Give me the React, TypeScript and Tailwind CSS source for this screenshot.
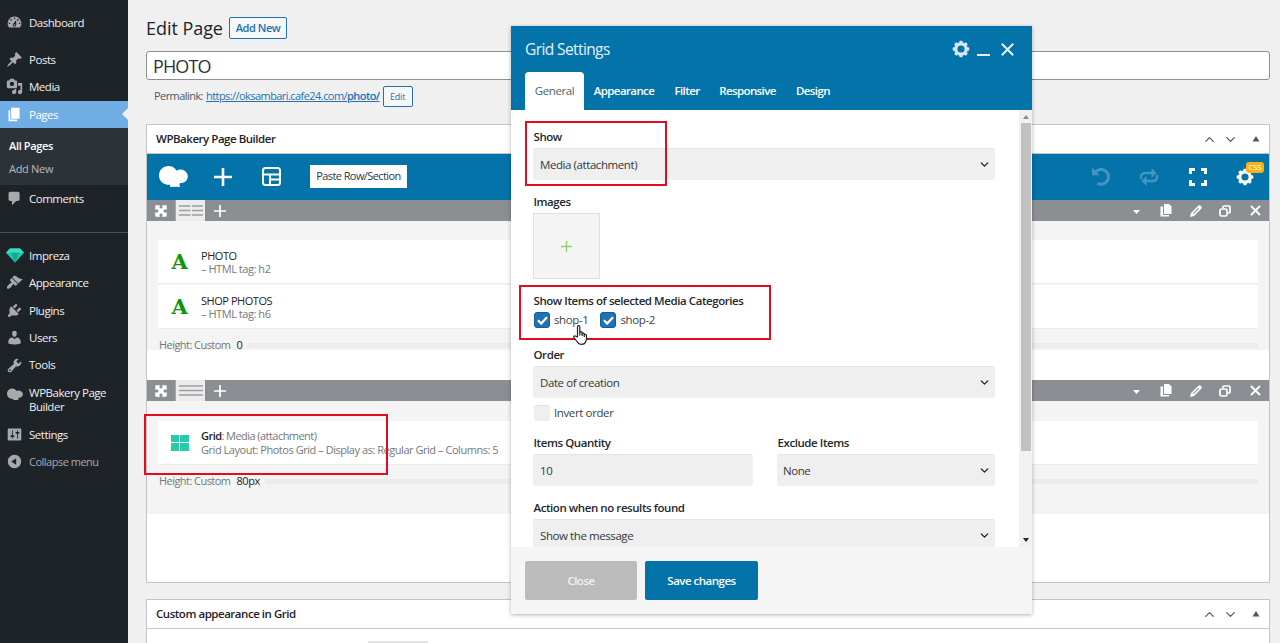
import { ReactNode } from 'react';
import { ChevronDown, ChevronUp } from 'lucide-react';
import clsx from 'clsx';

const paths = {
  dashboard: 'M3.76 16h12.48A7.998 7.998 0 0010 3a7.998 7.998 0 00-6.24 13zM10 4c.55 0 1 .45 1 1s-.45 1-1 1-1-.45-1-1 .45-1 1-1zM6 6c.55 0 1 .45 1 1s-.45 1-1 1-1-.45-1-1 .45-1 1-1zm8 0c.55 0 1 .45 1 1s-.45 1-1 1-1-.45-1-1 .45-1 1-1zm-5.37 5.55L12 7v6c0 1.1-.9 2-2 2s-2-.9-2-2c0-.57.24-1.08.63-1.45zM4 10c.55 0 1 .45 1 1s-.45 1-1 1-1-.45-1-1 .45-1 1-1zm12 0c.55 0 1 .45 1 1s-.45 1-1 1-1-.45-1-1 .45-1 1-1zm-5 3c0-.55-.45-1-1-1s-1 .45-1 1 .45 1 1 1 1-.45 1-1z',
  posts: 'M10.44 3.02l1.82-1.82 6.36 6.35-1.83 1.82c-1.05-.68-2.48-.57-3.41.36l-.75.75c-.92.93-1.04 2.35-.35 3.41l-1.83 1.82-2.41-2.41-2.8 2.79c-.42.42-3.38 2.71-3.8 2.29s1.86-3.39 2.28-3.81l2.79-2.79L4.1 9.36l1.83-1.82c1.05.69 2.48.57 3.4-.36l.75-.75c.93-.92 1.05-2.35.36-3.41z',
  media: 'M13 11V4c0-.55-.45-1-1-1h-1.67L9 1H5L3.67 3H2c-.55 0-1 .45-1 1v7c0 .55.45 1 1 1h10c.55 0 1-.45 1-1zM7 4.5c1.38 0 2.5 1.12 2.5 2.5S8.38 9.5 7 9.5 4.5 8.38 4.5 7 5.62 4.5 7 4.5zM14 6h5v10.5c0 1.38-1.12 2.5-2.5 2.5S14 17.88 14 16.5s1.12-2.5 2.5-2.5c.17 0 .34.02.5.05V9h-3V6zm-4 8.05V13h2v3.5c0 1.38-1.12 2.5-2.5 2.5S7 17.88 7 16.5 8.12 14 9.5 14c.17 0 .34.02.5.05z',
  pages: 'M6 15V2h10v13H6zm-1 1h8v2H3V5h2v11z',
  comments: 'M5 2h9c1.1 0 2 .9 2 2v7c0 1.1-.9 2-2 2h-2l-5 5v-5H5c-1.1 0-2-.9-2-2V4c0-1.1.9-2 2-2z',
  appearance: 'M14.48 11.06L7.41 3.99l1.5-1.5c.5-.56 2.3-.47 3.51.32 1.21.8 1.43 1.28 2.91 2.1 1.18.64 2.45 1.26 4.45.85zm-.71.71L6.7 4.7 4.93 6.47c-.39.39-.39 1.02 0 1.41l1.06 1.06c.39.39.39 1.03 0 1.42-.6.6-1.43 1.11-2.21 1.69-.35.26-.7.53-1.01.84C1.43 14.23.4 16.08 1.4 17.07c.99 1 2.84-.03 4.18-1.36.31-.31.58-.66.85-1.02.57-.78 1.08-1.61 1.69-2.21.39-.39 1.02-.39 1.41 0l1.06 1.06c.39.39 1.02.39 1.41 0z',
  plugins: 'M13.11 4.36L9.87 7.6 8 5.73l3.24-3.24c.35-.34 1.05-.2 1.56.32.52.51.66 1.21.31 1.55zm-8 1.77l.91-1.12 9.01 9.01-1.19.84c-.71.71-2.63 1.16-3.82 1.16H6.14L4.9 17.26c-.59.59-1.54.59-2.12 0-.59-.58-.59-1.53 0-2.12l1.24-1.24v-3.88c0-1.13.4-3.19 1.09-3.89zm7.26 3.97l3.24-3.24c.34-.35 1.04-.21 1.55.31.52.51.66 1.21.31 1.55l-3.24 3.25z',
  users: 'M10 9.25c-2.27 0-2.73-3.44-2.73-3.44C7 4.02 7.82 2 9.97 2c2.16 0 2.98 2.02 2.71 3.81 0 0-.41 3.44-2.68 3.44zm0 2.57L12.72 10c2.39 0 4.52 2.33 4.52 4.53v2.49s-3.65 1.13-7.24 1.13c-3.65 0-7.24-1.13-7.24-1.13v-2.49c0-2.25 1.94-4.48 4.47-4.48z',
  tools: 'M16.68 9.77c-1.34 1.34-3.3 1.67-4.95.99l-5.41 6.52c-.99.99-2.59.99-3.58 0s-.99-2.59 0-3.57l6.52-5.42c-.68-1.65-.35-3.61.99-4.95 1.28-1.28 3.12-1.62 4.72-1.06l-2.89 2.89 2.82 2.82 2.86-2.87c.53 1.58.18 3.39-1.08 4.65zM3.81 16.21c.4.39 1.04.39 1.43 0 .4-.4.4-1.04 0-1.43-.39-.4-1.03-.4-1.43 0-.39.39-.39 1.03 0 1.43z',
  settings: 'M18 16V4c0-.55-.45-1-1-1H3c-.55 0-1 .45-1 1v12c0 .55.45 1 1 1h14c.55 0 1-.45 1-1zM8 11h1c.55 0 1 .45 1 1s-.45 1-1 1H8v1.5c0 .28-.22.5-.5.5s-.5-.22-.5-.5V13H6c-.55 0-1-.45-1-1s.45-1 1-1h1V5.5c0-.28.22-.5.5-.5s.5.22.5.5V11zm5-2h-1c-.55 0-1-.45-1-1s.45-1 1-1h1V5.5c0-.28.22-.5.5-.5s.5.22.5.5V7h1c.55 0 1 .45 1 1s-.45 1-1 1h-1v5.5c0 .28-.22.5-.5.5s-.5-.22-.5-.5V9z',
  collapse: 'M10 2.16c4.33 0 7.84 3.51 7.84 7.84s-3.51 7.84-7.84 7.84S2.16 14.33 2.16 10 5.67 2.16 10 2.16zm2 11.72V6.12L6.18 9.97z',
};

function Dashicon({ name, className }: { name: keyof typeof paths; className?: string }) {
  return (
    <svg viewBox="0 0 20 20" className={clsx('w-[17px] h-[17px] shrink-0 fill-current', className)}>
      <path d={paths[name]} />
    </svg>
  );
}

function BakeryLogo({ className }: { className?: string }) {
  return (
    <svg viewBox="0 0 29 22" className={clsx('shrink-0 fill-current', className)}>
      <path d="M9.5 0C13 0 16 1.8 17.5 4.7c1.2-.9 2.8-1.3 4.3-1.1 4 .3 7 3.3 7 6.8 0 3.8-3.4 6.6-7 6.5-.6 0-1 .2-1.2.6-.3 1.4.3 2 .2 3-.1.7-.9.6-1.5.5-2.6-.6-5 .1-7.6-.1-.9-.1-1-.7-.5-1.2.5-.5 0-1-.9-.9C4.600 19 0 15 0 9.500 0 4 4.300 0 9.500 0z" />
    </svg>
  );
}

function Gem() {
  return (
    <svg viewBox="0 0 18 15" className="w-[18px] h-[15px] shrink-0">
      <path d="M4 .5h10l4 4.300L9 14.500 0 4.800z" fill="#1fc8ae" />
      <path d="M4 .5h10l4 4.300H0z" fill="#3ddcc4" />
      <path d="M5 4.800h8L9 14.500z" fill="#10ad94" />
    </svg>
  );
}

const teeth = [0, 45, 90, 135, 180, 225, 270, 315];

function Gear({ className }: { className?: string }) {
  return (
    <svg viewBox="-9 -9 18 18" className={clsx('shrink-0', className)}>
      <circle r="5.200" fill="none" stroke="currentColor" strokeWidth="3.200" />
      {teeth.map((a) => (
        <rect key={a} x="-1.700" y="-8.300" width="3.400" height="3" rx="1" fill="currentColor" transform={`rotate(${a})`} />
      ))}
    </svg>
  );
}

function MenuItem({ icon, label, className, active }: { icon: ReactNode; label: string; className?: string; active?: boolean }) {
  return (
    <a className={clsx('relative flex items-center h-[27.4px] shrink-0', active ? 'bg-[#72aee6] text-white' : 'text-[#f0f0f1]', className)}>
      <span className={clsx('w-[29px] flex justify-center shrink-0', active ? 'text-white' : 'text-[#a7aaad]')}>{icon}</span>
      {label}
      {active && <span className="absolute right-0 top-[7px] border-y-[6.5px] border-y-transparent border-r-[6.5px] border-r-[#f0f0f1]" />}
    </a>
  );
}

function Sidebar() {
  return (
    <aside className="w-32 h-[643px] shrink-0 bg-[#1d2327] pt-[9px] flex flex-col text-[11.5px] tracking-[-0.48px]">
      <MenuItem icon={<Dashicon name="dashboard" />} label="Dashboard" className="mb-[9.500px]" />
      <MenuItem icon={<Dashicon name="posts" />} label="Posts" />
      <MenuItem icon={<Dashicon name="media" />} label="Media" />
      <MenuItem icon={<Dashicon name="pages" />} label="Pages" active />
      <div className="h-[57px] shrink-0 bg-[#2c3338] pl-[9px] pt-[6px] leading-[23px]">
        <div className="text-white font-semibold text-[11px] tracking-[-0.35px]">All Pages</div>
        <div className="text-[#b9bcbf] text-[11px] tracking-[-0.3px]">Add New</div>
      </div>
      <MenuItem icon={<Dashicon name="comments" />} label="Comments" />
      <div className="h-px shrink-0 bg-[#4a4f53] mt-[20px] mb-[8.300px]" />
      <MenuItem icon={<Gem />} label="Impreza" />
      <MenuItem icon={<Dashicon name="appearance" />} label="Appearance" />
      <MenuItem icon={<Dashicon name="plugins" />} label="Plugins" />
      <MenuItem icon={<Dashicon name="users" />} label="Users" />
      <MenuItem icon={<Dashicon name="tools" />} label="Tools" />
      <div className="flex h-[42px] shrink-0 pt-[7px] leading-[14.5px] text-[#f0f0f1]">
        <span className="w-[29px] flex justify-center pt-[2px] text-[#a7aaad]">
          <BakeryLogo className="w-4 h-[13px]" />
        </span>
        <span className="w-[86px]">WPBakery Page Builder</span>
      </div>
      <MenuItem icon={<Dashicon name="settings" />} label="Settings" />
      <MenuItem icon={<Dashicon name="collapse" />} label="Collapse menu" className="text-[#a7aaad]! text-[11px] tracking-[-0.5px]" />
    </aside>
  );
}

function PanelHeader({ title }: { title: string }) {
  return (
    <div className="h-[29px] flex items-center pl-[9px] pr-[9px] border-b border-[#c3c4c7] text-[11.5px] font-semibold tracking-[-0.47px] text-[#1d2327] shrink-0">
      <span className="flex-1">{title}</span>
      <ChevronUp className="w-[15px] h-[15px] text-[#50575e] mr-[6px]" />
      <ChevronDown className="w-[15px] h-[15px] text-[#50575e] mr-[14px]" />
      <svg viewBox="0 0 8 6" className="w-[8px] h-[6px] fill-[#50575e]"><path d="M4 0l3.500 5.500h-7z" /></svg>
    </div>
  );
}

function Toolbar() {
  return (
    <div className="h-[46px] bg-[#0473aa] flex items-center pl-[12px] pr-[15px] pb-px text-white shrink-0">
      <BakeryLogo className="w-[29px] h-[22px] mr-[26px]" />
      <svg viewBox="0 0 18 18" className="w-[18px] h-[18px] mr-[30px]"><path d="M9 0v18M0 9h18" stroke="currentColor" strokeWidth="2.600" /></svg>
      <svg viewBox="0 0 19 19" className="w-[19px] h-[19px] mr-[29px]" fill="none" stroke="currentColor" strokeWidth="2">
        <rect x="1" y="1" width="17" height="17" rx="2.500" />
        <path d="M1 7.500h17M8 7.500V18M8 12.500h10" />
      </svg>
      <button className="w-[97px] h-[23px] bg-white text-[11px] tracking-[-0.58px] text-[#32373c] whitespace-nowrap">Paste Row/Section</button>
      <span className="flex-1" />
      <svg viewBox="0 0 18 18" className="w-[19px] h-[19px] opacity-25 mr-[28px]" fill="none" stroke="currentColor" strokeWidth="2.800">
        <path d="M3.500 4.500A7 7 0 1 1 5 15.300" />
        <path d="M0 .5v7.200h7.200z" fill="currentColor" stroke="none" />
      </svg>
      <svg viewBox="0 0 20 18" className="w-[20px] h-[18px] opacity-25 mr-[30px]" fill="none" stroke="currentColor" strokeWidth="2.500">
        <path d="M2 11V9a4 4 0 0 1 4-4h8M18 7v2a4 4 0 0 1-4 4H6" />
        <path d="M12.500 0v10l5-5zM7.500 8v10l-5-5z" fill="currentColor" stroke="none" />
      </svg>
      <svg viewBox="0 0 18 18" className="w-[18px] h-[18px] mr-[29px]" fill="none" stroke="currentColor" strokeWidth="3">
        <path d="M1.500 6V1.500H6M12 1.500h4.500V6M16.500 12v4.500H12M6 16.500H1.500V12" />
      </svg>
      <span className="relative">
        <Gear className="w-[18px] h-[18px]" />
        <span className="absolute left-[10px] top-[-6px] w-[18px] h-[11px] rounded-[3px] bg-[#fcb214] text-[7.500px] leading-[11px] text-center">CSS</span>
      </span>
    </div>
  );
}

function RowBar({ split }: { split?: boolean }) {
  return (
    <div className="h-[21px] bg-[#8b8e93] flex items-center text-white shrink-0 pr-[8px]">
      <div className="w-[29px] h-full flex items-center justify-center border-r border-[#a9abae]">
        <svg viewBox="0 0 12 12" className="w-[12px] h-[12px]">
          <path d="M1 .3h4.300L4.100 1.900 6 3.800l1.900-1.900L6.700.3H11q.7 0 .7.7v4.300l-1.600-1.200L8.200 6l1.900 1.900 1.600-1.200V11q0 .7-.7.7H6.700l1.200-1.600L6 8.200l-1.900 1.900 1.200 1.600H1q-.7 0-.7-.7V6.700l1.600 1.200L3.800 6 1.900 4.100.3 5.300V1q0-.7.7-.7z" fill="currentColor" />
        </svg>
      </div>
      <div className="w-[29px] h-full bg-[#ececec] flex items-center justify-center">
        <svg viewBox="0 0 24 11" className="w-[24px] h-[11px]" stroke="#9b9ea2" strokeWidth="1.300">
          {split ? <path d="M0 1h11.500M13 1h11M0 5.500h11.500M13 5.500h11M0 10h11.500M13 10h11" /> : <path d="M0 1h24M0 5.500h24M0 10h24" />}
        </svg>
      </div>
      <svg viewBox="0 0 12 12" className="w-[12px] h-[12px] ml-[9px]"><path d="M6 0v12M0 6h12" stroke="currentColor" strokeWidth="1.700" /></svg>
      <span className="flex-1" />
      <svg viewBox="0 0 7 4" className="w-[7px] h-[4px] mr-[20px] mt-[2px]"><path d="M0 0h7L3.500 4z" fill="currentColor" /></svg>
      <svg viewBox="0 0 12 13" className="w-[12px] h-[13px] mr-[18px]" fill="currentColor">
        <path d="M4 0h5l2.500 2.500V10H4z" />
        <path d="M.5 2.500H3V11h6v1.500H.5z" />
      </svg>
      <svg viewBox="0 0 12 12" className="w-[12px] h-[12px] mr-[17px]" fill="currentColor">
        <path fillRule="evenodd" d="M0 12l1-4L8 1c1-1 2-1 3 0s1 2 0 3l-7 7zM3 8.200l.8.8L9 3.800 8.200 3z" />
      </svg>
      <svg viewBox="0 0 12 12" className="w-[12px] h-[12px] mr-[19px]" fill="none" stroke="currentColor" strokeWidth="1.700">
        <path d="M4 3V2a1 1 0 0 1 1-1h5a1 1 0 0 1 1 1v5a1 1 0 0 1-1 1H9" />
        <rect x="1" y="4" width="7" height="7" rx="1.500" />
      </svg>
      <svg viewBox="0 0 11 11" className="w-[11px] h-[11px]"><path d="M1 1l9 9M10 1l-9 9" stroke="currentColor" strokeWidth="1.900" /></svg>
    </div>
  );
}

function LetterA() {
  return <span className="w-[43px] text-center font-['DejaVu_Serif',serif] font-bold text-[21px] leading-none text-[#0b960b]">A</span>;
}

function Element({ icon, children, className }: { icon: ReactNode; children: ReactNode; className?: string }) {
  return (
    <div className={clsx('h-[44px] bg-white flex items-center border-b border-[#ececec] text-[11px] text-[#74787d] whitespace-nowrap', className)}>
      {icon}
      <div>{children}</div>
    </div>
  );
}

function HeightLine({ value }: { value: string }) {
  return (
    <div className="h-[32px] flex items-center pl-px text-[11px] tracking-[-0.55px] text-[#74787d]">
      <span>Height: Custom</span>
      <span className="ml-[6px] mr-[5px] text-[#1d2327] tracking-[-0.4px]">{value}</span>
      <span className="flex-1 h-[5px] bg-[#ececec]" />
    </div>
  );
}

function Select({ value, className, plain }: { value: string; className?: string; plain?: boolean }) {
  return (
    <div className={clsx('h-[32px] shrink-0 rounded-[3px] bg-[#efefef] border-t border-[#e4e4e4] flex items-center pl-[7px] pr-[4px] text-[11.5px] tracking-[-0.42px] text-[#32373c]', className)}>
      <span className="flex-1">{value}</span>
      {!plain && <ChevronDown className="w-[13px] h-[13px] text-[#1d2327]" strokeWidth={2.500} />}
    </div>
  );
}

function Label({ children, className }: { children: ReactNode; className?: string }) {
  return <div className={clsx('pl-[0.500px] text-[11.5px] leading-[16px] font-semibold tracking-[-0.43px] text-[#23282d] shrink-0', className)}>{children}</div>;
}

function Checkbox({ label, checked }: { label: string; checked?: boolean }) {
  return (
    <label className="flex items-center text-[11.5px] tracking-[-0.38px] text-[#3c4146]">
      <span className={clsx('w-[16px] h-[16px] rounded-[3px] mr-[4px] flex items-center justify-center', checked ? 'bg-[#2271b1] border border-[#135e96]' : 'bg-[#efefef] border-t border-[#e2e2e2]')}>
        {checked && (
          <svg viewBox="0 0 11 9" className="w-[11px] h-[9px]"><path d="M1 4.300L4.200 7.500 10 1.200" fill="none" stroke="white" strokeWidth="2.300" /></svg>
        )}
      </span>
      {label}
    </label>
  );
}

const tabs = [
  { label: 'Appearance', width: 'w-[80px]' },
  { label: 'Filter', width: 'w-[46px]' },
  { label: 'Responsive', width: 'w-[75px]' },
  { label: 'Design', width: 'w-[56px]' },
];

function SettingsModal() {
  return (
    <div className="absolute left-[511px] top-[26px] w-[521px] h-[588px] bg-white flex flex-col shadow-[0_1px_4px_rgba(0,0,0,0.3)]">
      <div className="h-[84px] bg-[#0473aa] shrink-0 flex flex-col text-white">
        <div className="h-[46px] flex items-center pl-[14px] pr-[18px] text-[#e6f1f7]">
          <span className="flex-1 text-[15.5px] tracking-[-0.6px] pt-px">Grid Settings</span>
          <Gear className="w-[18px] h-[18px] mr-[7px] text-[#d5e7f1]" />
          <span className="w-[13px] h-[2px] bg-[#e6f1f7] mr-[11px] mt-[11px]" />
          <svg viewBox="0 0 13 13" className="w-[13px] h-[13px]"><path d="M.8.8l11.400 11.400M12.200.8L.8 12.200" stroke="currentColor" strokeWidth="2" /></svg>
        </div>
        <div className="flex flex-1 pl-[14px] text-[11.500px] tracking-[-0.4px]">
          <span className="w-[59px] bg-white rounded-t-[4px] text-[#555d66] flex items-center justify-center">General</span>
          {tabs.map((t) => (
            <span key={t.label} className={clsx('flex items-center justify-center font-semibold tracking-[-0.6px]', t.width)}>{t.label}</span>
          ))}
        </div>
      </div>

      <div className="h-[437px] shrink-0 flex overflow-hidden">
        <div className="flex-1 flex flex-col pl-[22px] pr-[24px] pt-[19px]">
          <Label className="mb-[3px]">Show</Label>
          <Select value="Media (attachment)" />
          <Label className="mt-[14px] mb-[3px]">Images</Label>
          <div className="w-[67px] h-[66px] shrink-0 bg-[#f4f4f4] border border-[#e0e0e0] flex items-center justify-center">
            <svg viewBox="0 0 11 11" className="w-[11px] h-[11px]"><path d="M5.500 0v11M0 5.500h11" stroke="#8fd16a" strokeWidth="1.300" /></svg>
          </div>
          <Label className="mt-[14px] mb-[3px]">Show Items of selected Media Categories</Label>
          <div className="flex gap-[12px] h-[16px] shrink-0 pl-px">
            <Checkbox label="shop-1" checked />
            <Checkbox label="shop-2" checked />
          </div>
          <Label className="mt-[19px] mb-[3px]">Order</Label>
          <Select value="Date of creation" />
          <div className="h-[16px] mt-[7px] shrink-0 flex pl-px">
            <Checkbox label="Invert order" />
          </div>
          <div className="flex gap-[24px] mt-[14px] shrink-0">
            <div className="w-[220px]">
              <Label className="mb-[3px]">Items Quantity</Label>
              <Select value="10" plain />
            </div>
            <div className="flex-1">
              <Label className="mb-[3px]">Exclude Items</Label>
              <Select value="None" className="pl-[6px]!" />
            </div>
          </div>
          <Label className="mt-[14px] mb-[3px]">Action when no results found</Label>
          <Select value="Show the message" />
        </div>
        {/* scrollbar */}
        <div className="w-[13px] bg-[#f1f1f1] flex flex-col items-center">
          <svg viewBox="0 0 6 4" className="w-[6px] h-[4px] mt-[5px] mb-[4px] fill-[#8a8a8a]"><path d="M3 0l3 4H0z" /></svg>
          <div className="w-[10px] h-[328px] bg-[#c1c1c1] shrink-0" />
          <span className="flex-1" />
          <svg viewBox="0 0 6 4" className="w-[6px] h-[4px] mb-[5px] fill-[#222]"><path d="M0 0h6L3 4z" /></svg>
        </div>
      </div>

      <div className="flex-1 bg-[#f5f5f5] flex pl-[14px] pt-[14px] gap-[8px] text-[11.5px] font-semibold tracking-[-0.5px] text-white">
        <button className="w-[112px] h-[39px] rounded-[2px] bg-[#bbb] text-[#f2f2f2]">Close</button>
        <button className="w-[113px] h-[39px] rounded-[2px] bg-[#0473aa]">Save changes</button>
      </div>
    </div>
  );
}

export default function App() {
  return (
    <div className="relative w-[1280px] h-[643px] overflow-hidden flex bg-[#f0f0f1] font-['Open_Sans','Noto_Sans',sans-serif]">
      <Sidebar />

      <main className="flex-1 min-w-0 pl-[18px] pr-[10px] flex flex-col">
        <div className="flex items-center mt-[17px] h-[22px] shrink-0">
          <h1 className="w-[83px] text-[18px] tracking-[-0.05px] text-[#1d2327] whitespace-nowrap">Edit Page</h1>
          <button className="w-[58px] h-[22px] border border-[#2271b1] rounded-[2px] bg-[#f6f7f7] text-[#2271b1] text-[11px] font-semibold tracking-[-0.45px]">Add New</button>
        </div>
        <div className="mt-[12px] h-[29px] shrink-0 bg-white border border-[#8c8f94] rounded-[3px] flex items-center pl-[6px] pt-px text-[18px] tracking-[-0.9px] text-[#2c3338]">PHOTO</div>
        <div className="mt-[6px] h-[21px] shrink-0 flex items-center pl-[8px] text-[11px] tracking-[-0.56px] text-[#50575e]">
          <span className="font-medium">Permalink:</span>
          <span className="ml-[3px] underline text-[#2271b1]">https://oksambari.cafe24.com/<span className="font-semibold">photo/</span></span>
          <button className="ml-[3px] w-[30px] h-[21px] border border-[#2271b1] rounded-[2px] bg-[#f6f7f7] text-[#2271b1] text-[9px] tracking-[-0.2px]">Edit</button>
        </div>

        <section className="mt-[17px] h-[459px] shrink-0 border border-[#c3c4c7] bg-white flex flex-col">
          <PanelHeader title="WPBakery Page Builder" />
          <Toolbar />
          <RowBar split />
          <div className="bg-[#f4f4f4] h-[129px] shrink-0 pt-[19px] px-[11px]">
            <Element icon={<LetterA />} className="leading-[13px] tracking-[-0.45px]">
              <div className="text-[#1d2327] font-medium pt-px">PHOTO</div>
              <div>– HTML tag: h2</div>
            </Element>
            <Element icon={<LetterA />} className="mt-px leading-[13px] tracking-[-0.45px]">
              <div className="text-[#1d2327] font-medium pt-px">SHOP PHOTOS</div>
              <div>– HTML tag: h6</div>
            </Element>
            <HeightLine value="0" />
          </div>
          <div className="h-[30px] shrink-0" />
          <RowBar />
          <div className="bg-[#f4f4f4] h-[113px] shrink-0 pt-[20px] px-[11px]">
            <Element
              className="leading-[13.500px] tracking-[-0.46px]"
              icon={
                <span className="w-[43px] flex justify-center">
                  <span className="grid grid-cols-2 gap-[1.500px] w-[18px] h-[16px]">
                    {teeth.slice(0, 4).map((k) => <span key={k} className="bg-[#25cbab]" />)}
                  </span>
                </span>
              }
            >
              <div className="tracking-[-0.55px]"><span className="text-[#1d2327] font-semibold">Grid</span>: Media (attachment)</div>
              <div>Grid Layout: Photos Grid – Display as: Regular Grid – Columns: 5</div>
            </Element>
            <HeightLine value="80px" />
          </div>
        </section>

        <section className="mt-[16px] h-[60px] shrink-0 border border-[#c3c4c7] bg-white flex flex-col">
          <PanelHeader title="Custom appearance in Grid" />
          <div className="mt-[12px] ml-[221px] w-[60px] h-[10px] bg-[#e3e3e3]" />
        </section>
      </main>

      <SettingsModal />

      {/* highlight frames */}
      <div className="absolute left-[525px] top-[121px] w-[142px] h-[65px] border-2 border-[#e30b20]" />
      <div className="absolute left-[519px] top-[285px] w-[252px] h-[55px] border-2 border-[#e30b20]" />
      <div className="absolute left-[144px] top-[414px] w-[244px] h-[61px] border-2 border-[#e30b20]" />

      {/* pointer */}
      <svg viewBox="0 0 15 20" className="absolute left-[573px] top-[325px] w-[15px] h-[20px]" fill="white" stroke="#222" strokeWidth="1.200" strokeLinejoin="round">
        <path d="M4.500 12V2c0-1.800 2.300-1.800 2.300 0v5.500c0-1.300 2.300-1.200 2.300.2V9c0-1.300 2.200-1.100 2.200.2v.8c.2-1.100 2.200-1 2.200.6V14c0 1.500-1 2.300-1.200 3.500-.5 1.300-2 1.800-4 1.800-2.300 0-3.300-.8-4-2.300L1 12.500c-.8-1.500.8-2.300 1.800-1.200z" />
        <path d="M6.800 7.500v3M9.100 8.500v2.500M11.300 9.500V12" fill="none" />
      </svg>
    </div>
  );
}
